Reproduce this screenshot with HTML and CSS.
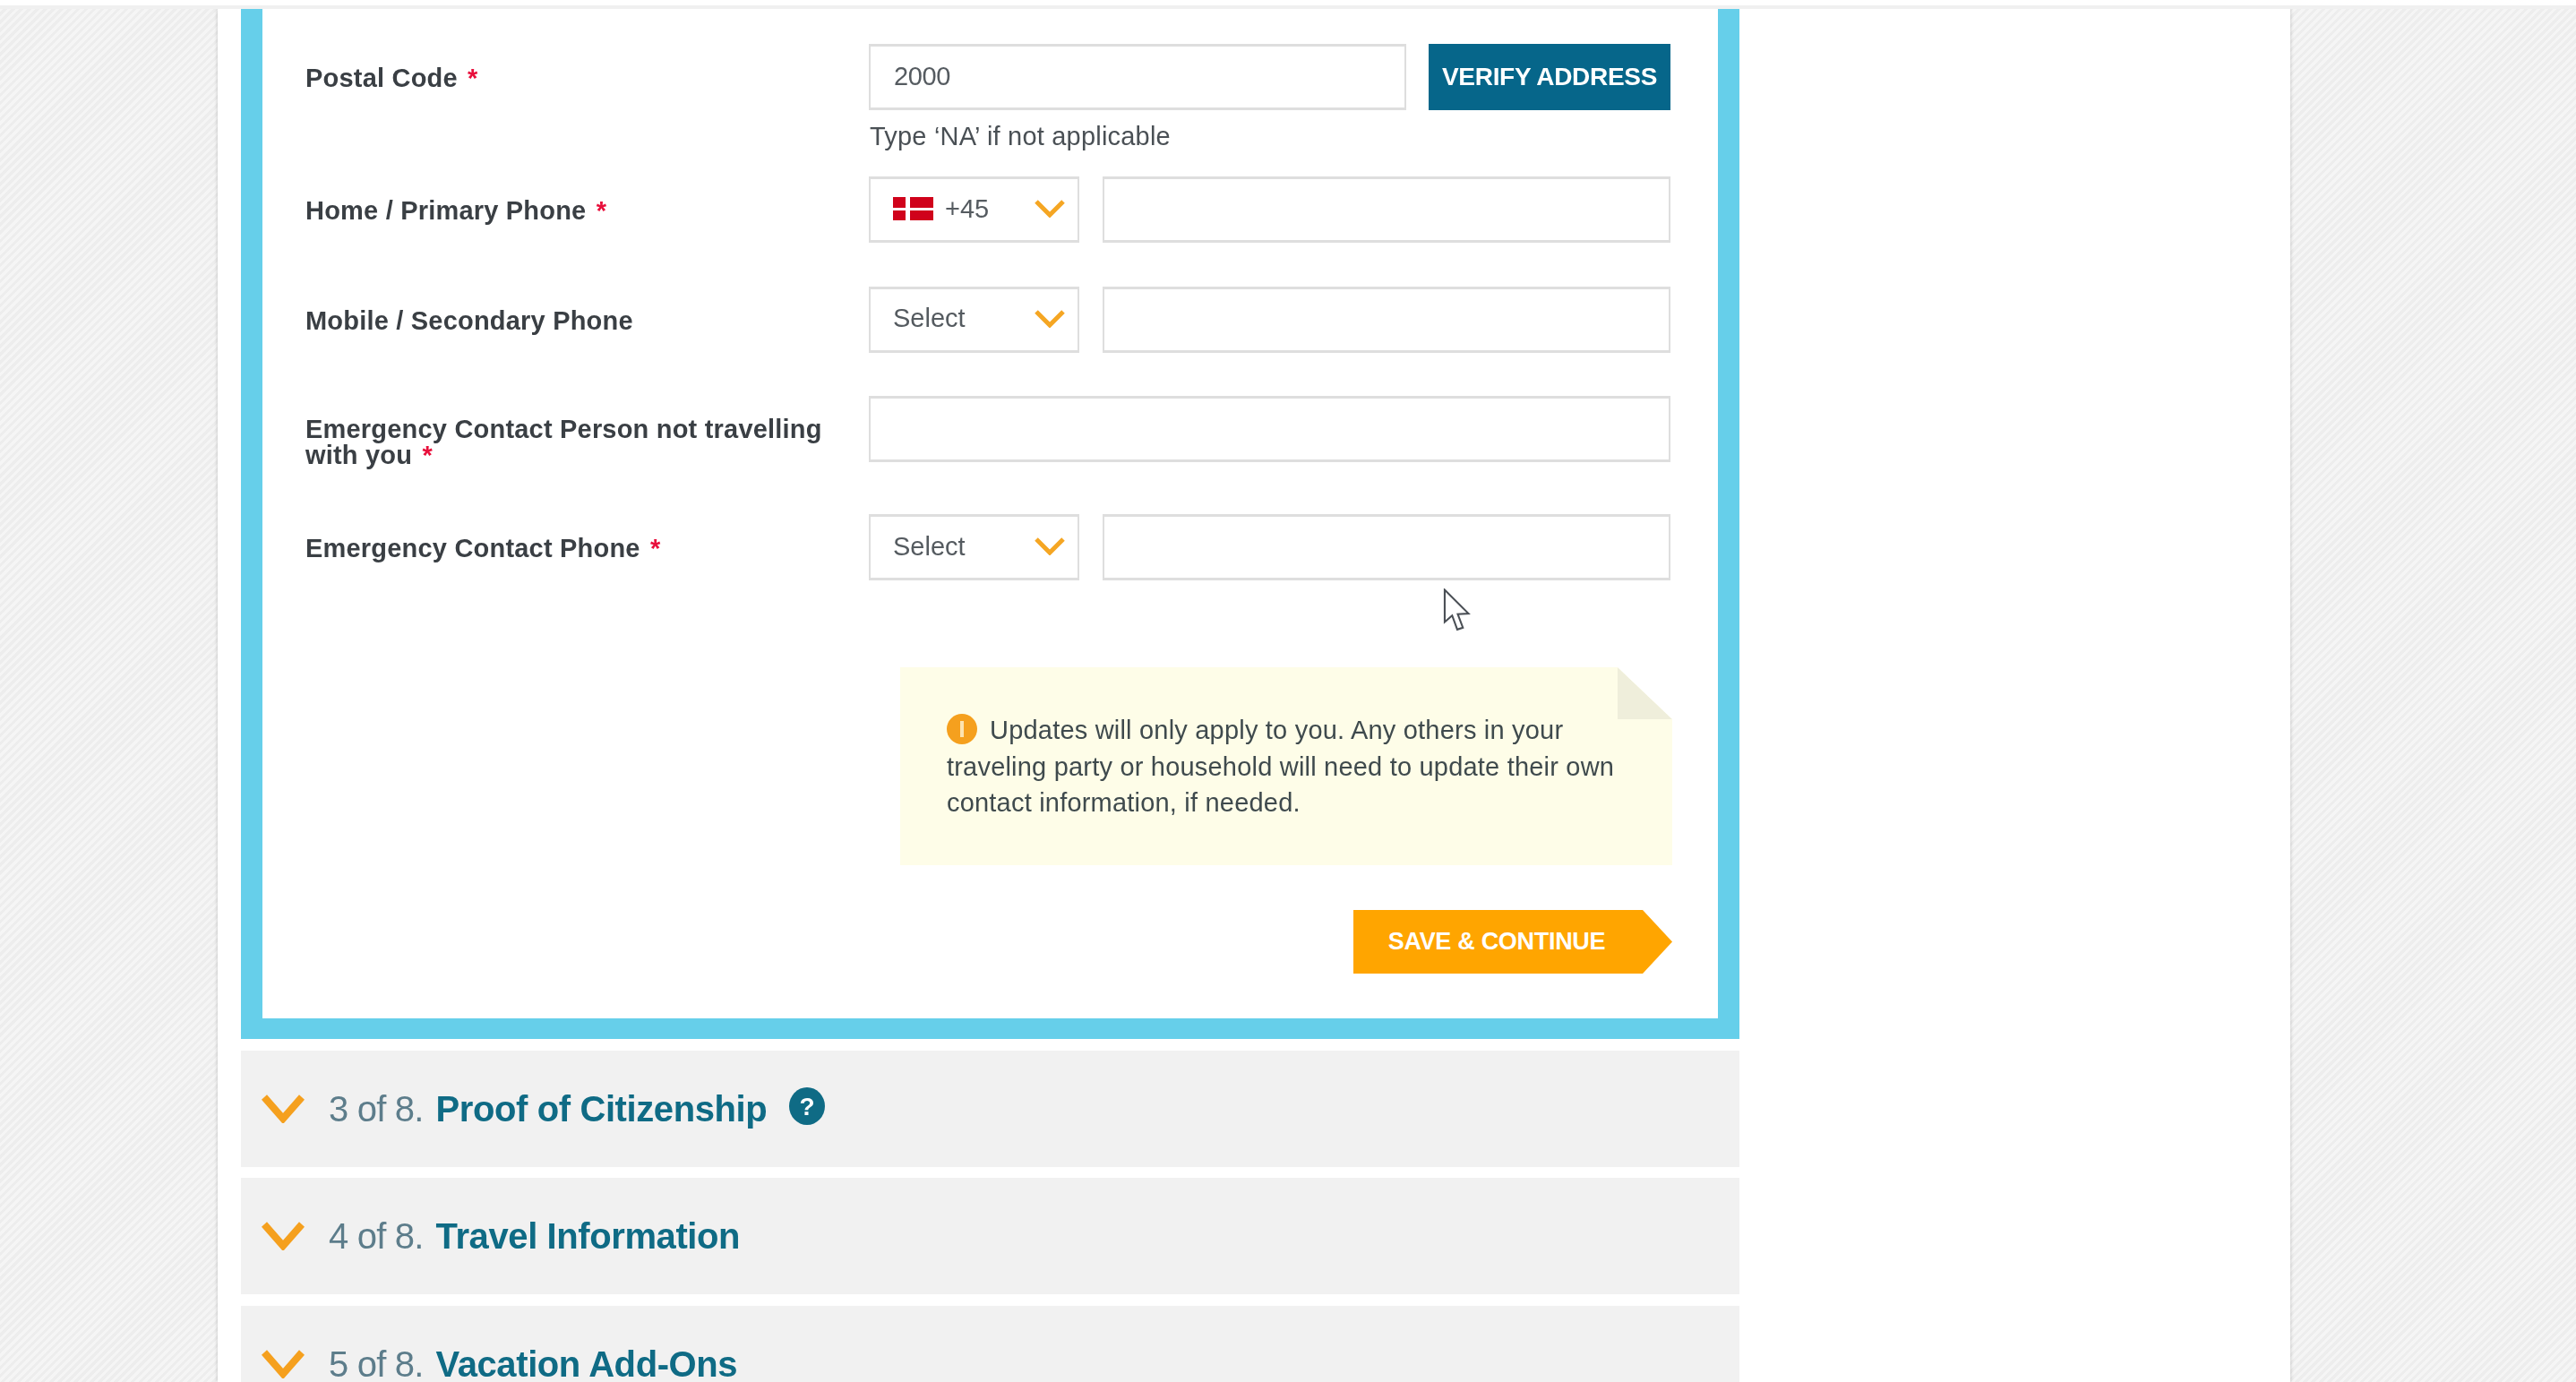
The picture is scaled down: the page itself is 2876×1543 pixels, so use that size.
FILE: index.html
```html
<!DOCTYPE html>
<html lang="en">
<head>
    <meta charset="UTF-8">
    <meta name="viewport" content="width=device-width, initial-scale=1.0">
    <title>Guest Information</title>
    <link rel="stylesheet" href="styles.css">
</head>
<body>
    <div class="top-strip"></div>
    <div class="sheet">
        <div class="steps">
            <section class="panel">
                <div class="form-row row-postal">
                    <label class="field-label">Postal Code <span class="req">*</span></label>
                    <div class="fields">
                        <div class="field-line">
                            <div class="text-box postal-box">2000</div>
                            <button class="verify-btn">VERIFY ADDRESS</button>
                        </div>
                        <p class="hint">Type ‘NA’ if not applicable</p>
                    </div>
                </div>

                <div class="form-row">
                    <label class="field-label">Home / Primary Phone <span class="req">*</span></label>
                    <div class="field-line">
                        <div class="select-box">
                            <svg class="flag" viewBox="0 0 45 26"><rect width="45" height="26" fill="#d0021b"/><rect x="14" width="5" height="26" fill="#fff"/><rect y="12" width="45" height="3" fill="#fff"/></svg>
                            <span>+45</span>
                            <svg class="chevron-sm" viewBox="0 0 34 20"><path d="M2 2 L17 17 L32 2" fill="none" stroke="#f5a623" stroke-width="5"/></svg>
                        </div>
                        <div class="text-box phone-box"></div>
                    </div>
                </div>

                <div class="form-row">
                    <label class="field-label">Mobile / Secondary Phone</label>
                    <div class="field-line">
                        <div class="select-box">
                            <span>Select</span>
                            <svg class="chevron-sm" viewBox="0 0 34 20"><path d="M2 2 L17 17 L32 2" fill="none" stroke="#f5a623" stroke-width="5"/></svg>
                        </div>
                        <div class="text-box phone-box"></div>
                    </div>
                </div>

                <div class="form-row row-contact">
                    <label class="field-label two-line">Emergency Contact Person not travelling with you <span class="req">*</span></label>
                    <div class="field-line">
                        <div class="text-box wide-box"></div>
                    </div>
                </div>

                <div class="form-row row-last">
                    <label class="field-label">Emergency Contact Phone <span class="req">*</span></label>
                    <div class="field-line">
                        <div class="select-box">
                            <span>Select</span>
                            <svg class="chevron-sm" viewBox="0 0 34 20"><path d="M2 2 L17 17 L32 2" fill="none" stroke="#f5a623" stroke-width="5"/></svg>
                        </div>
                        <div class="text-box phone-box"></div>
                    </div>
                </div>

                <div class="note">
                    <p><svg class="note-icon" viewBox="0 0 34 34"><circle cx="17" cy="17" r="17" fill="#f5a01e"/><rect x="15" y="8" width="4" height="18" fill="#fde3b0"/></svg>Updates will only apply to you. Any others in your traveling party or household will need to update their own contact information, if needed.</p>
                </div>

                <div class="actions">
                    <button class="save-btn">SAVE &amp; CONTINUE</button>
                </div>
            </section>

            <div class="step-bar">
                <svg class="chevron" viewBox="0 0 48 32"><path d="M3 3 L24 27 L45 3" fill="none" stroke="#f5a01e" stroke-width="8"/></svg>
                <span class="step-num">3 of 8.</span>
                <span class="step-name">Proof of Citizenship</span>
                <svg class="help-icon" viewBox="0 0 40 42"><ellipse cx="20" cy="21" rx="20" ry="21" fill="#0f6b85"/><text x="20" y="31" text-anchor="middle" class="help-mark">?</text></svg>
            </div>
            <div class="step-bar">
                <svg class="chevron" viewBox="0 0 48 32"><path d="M3 3 L24 27 L45 3" fill="none" stroke="#f5a01e" stroke-width="8"/></svg>
                <span class="step-num">4 of 8.</span>
                <span class="step-name">Travel Information</span>
            </div>
            <div class="step-bar">
                <svg class="chevron" viewBox="0 0 48 32"><path d="M3 3 L24 27 L45 3" fill="none" stroke="#f5a01e" stroke-width="8"/></svg>
                <span class="step-num">5 of 8.</span>
                <span class="step-name">Vacation Add-Ons</span>
            </div>
        </div>
    </div>

    <!-- mouse pointer caught in the screenshot -->
    <svg class="pointer" viewBox="0 0 30 48"><path d="M1.5 1.5 L1.5 36 L9.5 29 L15 44 L21 42 L15.500 27.500 L27 27 Z" fill="#fff" stroke="#4a4f55" stroke-width="2"/></svg>
</body>
</html>
```
FILE: styles.css
```css
*,
*::before,
*::after {
    box-sizing: border-box;
}

:root {
    --clr-blue: #66cfea;
    --clr-teal: #0f6b85;
    --clr-orange: #ffa500;
    --clr-text: #3a3f44;
    --clr-border: #dedede;
}

html,
body {
    height: 100%;
}

body {
    margin: 0;
    overflow: hidden;
    position: relative;
    display: flex;
    flex-direction: column;
    align-items: flex-start;
    background: repeating-linear-gradient(135deg, #f5f5f5 0, #f5f5f5 3.2px, #ededed 3.2px, #ededed 6.4px);
    color: var(--clr-text);
    font-family: "Liberation Sans", Arial, sans-serif;
}

.top-strip {
    flex: none;
    position: relative;
    z-index: 1;
    width: 100%;
    height: 10px;
    background: #fff;
    border-bottom: 4px solid #f0f0f0;
}

.sheet {
    flex: 1;
    min-height: 0;
    width: 2314px;
    margin-left: 243px;
    padding-left: 26px;
    background: #fff;
    box-shadow: 0 0 4px rgba(0, 0, 0, 0.22);
    overflow: hidden;
    filter: blur(0.5px);
}

.steps {
    width: 1673px;
}

.panel {
    border: 24px solid var(--clr-blue);
    border-top: 0;
    border-bottom-width: 23px;
    padding: 39px 51px 50px 48px;
}

.form-row {
    display: grid;
    grid-template-columns: 629px 1fr;
    align-items: start;
    margin-bottom: 48.5px;
}

.row-postal {
    margin-bottom: 25px;
}

.row-contact {
    margin-bottom: 51px;
}

.row-last {
    margin-bottom: 97px;
}

.field-label {
    padding-top: 21px;
    font-size: 29px;
    line-height: 34px;
    font-weight: 700;
    letter-spacing: 0.2px;
}

.two-line {
    padding-top: 23px;
    line-height: 29px;
    padding-right: 20px;
}

.req {
    margin-left: 3px;
    color: #e8103c;
}

.fields {
    display: flex;
    flex-direction: column;
}

.field-line {
    display: flex;
    gap: 26px;
    height: 74px;
}

.text-box,
.select-box {
    height: 74px;
    background: #fff;
    border: 2px solid var(--clr-border);
    border-top-width: 3px;
    border-bottom-width: 3px;
    font-size: 29px;
    color: #555b60;
}

.text-box {
    line-height: 66px;
    padding-left: 26px;
    letter-spacing: -0.4px;
}

.postal-box {
    width: 600px;
}

.phone-box {
    width: 634px;
}

.wide-box {
    width: 895px;
}

.select-box {
    width: 235px;
    display: flex;
    align-items: center;
    gap: 13px;
    padding: 0 14px 2px 25px;
}

.flag {
    width: 45px;
    height: 26px;
}

.chevron-sm {
    width: 34px;
    height: 20px;
    margin-left: auto;
}

.verify-btn {
    width: 270px;
    height: 74px;
    margin-left: -1px;
    padding: 0;
    border: 0;
    background: #06668a;
    color: #fff;
    font-family: inherit;
    font-size: 28px;
    font-weight: 700;
    letter-spacing: -0.3px;
    white-space: nowrap;
}

.hint {
    margin: 9px 0 0;
    padding-left: 1px;
    font-size: 29px;
    line-height: 40px;
    letter-spacing: 0.2px;
    color: #4a5055;
}

.note {
    position: relative;
    width: 862px;
    height: 221px;
    margin-left: 664px;
    padding: 50px 40px 0 52px;
    background: #fefde8;
    clip-path: polygon(0 0, 801px 0, 100% 58px, 100% 100%, 0 100%);
    font-size: 29px;
    line-height: 40.5px;
    letter-spacing: 0.2px;
    color: #3f4a4d;
}

/* folded corner */
.note::after {
    content: "";
    position: absolute;
    top: 0;
    left: 801px;
    width: 61px;
    height: 58px;
    background: #efeedb;
    clip-path: polygon(0 0, 100% 100%, 0 100%);
}

.note p {
    margin: 0;
}

.note-icon {
    width: 34px;
    height: 34px;
    margin-right: 14px;
    vertical-align: -6px;
}

.actions {
    display: flex;
    justify-content: flex-end;
    margin-top: 50px;
}

.save-btn {
    width: 356px;
    height: 71px;
    padding: 0 36px 0 0;
    border: 0;
    background: var(--clr-orange);
    clip-path: polygon(0 0, 323px 0, 100% 50%, 323px 100%, 0 100%);
    color: #fff;
    font-family: inherit;
    font-size: 27px;
    font-weight: 700;
    letter-spacing: -0.3px;
    white-space: nowrap;
}

.step-bar {
    display: flex;
    align-items: center;
    height: 130px;
    margin-top: 12px;
    padding-left: 23px;
    background: #f1f1f1;
    font-size: 40px;
}

.panel + .step-bar,
.step-bar:last-child {
    margin-top: 13px;
}

.chevron {
    width: 48px;
    height: 32px;
    margin-right: 27px;
}

.step-num {
    color: #5d7d8b;
    letter-spacing: -0.8px;
    margin-right: 14px;
}

.step-name {
    color: var(--clr-teal);
    font-weight: 700;
    letter-spacing: -0.4px;
}

.help-icon {
    width: 40px;
    height: 42px;
    margin-left: 25px;
    margin-top: -6px;
}

.help-mark {
    fill: #fff;
    font-size: 28px;
    font-weight: 700;
}

.pointer {
    position: absolute;
    left: 1611px;
    top: 657px;
    width: 32px;
    height: 50px;
}
```
